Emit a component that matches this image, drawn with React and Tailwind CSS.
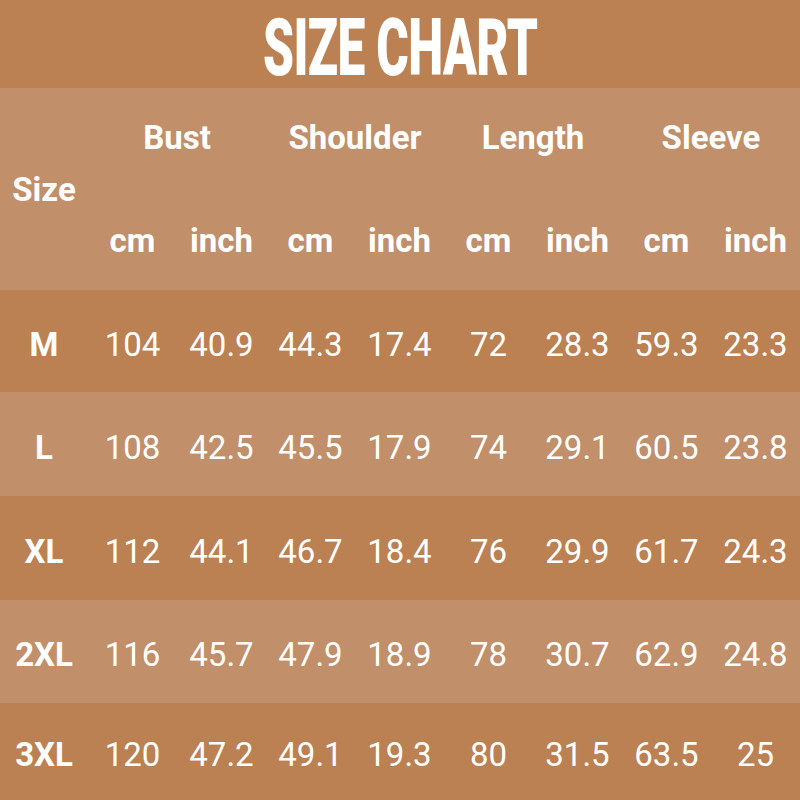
import React from 'react';

const rows = [
  { size: 'M', vals: ['104', '40.9', '44.3', '17.4', '72', '28.3', '59.3', '23.3'], h: 'h-[102px]', bg: 'bg-[#bc8152]' },
  { size: 'L', vals: ['108', '42.5', '45.5', '17.9', '74', '29.1', '60.5', '23.8'], h: 'h-[104px]', bg: 'bg-[#c18f69]' },
  { size: 'XL', vals: ['112', '44.1', '46.7', '18.4', '76', '29.9', '61.7', '24.3'], h: 'h-[104px]', bg: 'bg-[#bc8152]' },
  { size: '2XL', vals: ['116', '45.7', '47.9', '18.9', '78', '30.7', '62.9', '24.8'], h: 'h-[103px]', bg: 'bg-[#c18f69]' },
  { size: '3XL', vals: ['120', '47.2', '49.1', '19.3', '80', '31.5', '63.5', '25'], h: 'h-[97px]', bg: 'bg-[#bc8152]' },
];

const groups = ['Bust', 'Shoulder', 'Length', 'Sleeve'];

const App = () => {
  return (
    <div className="w-[800px] h-[800px] overflow-hidden text-white font-['Roboto',sans-serif]">
      {/* title band */}
      <div className="h-[88px] bg-[#bc8152] flex items-center justify-center">
        <h1 className="text-[80px] leading-none font-black tracking-[-1px] scale-x-[0.62] mt-[8px]">SIZE CHART</h1>
      </div>

      {/* header */}
      <div className="h-[202px] bg-[#c18f69] flex">
        <div className="w-[88px] flex items-center justify-center text-[33px] font-bold pt-[2px]">Size</div>
        <div className="flex-1 flex flex-col">
          <div className="h-[101px] grid grid-cols-4 items-center text-center text-[33px] font-bold">
            {groups.map((g) => (
              <div key={g} className="pb-[2px]">{g}</div>
            ))}
          </div>
          <div className="h-[101px] grid grid-cols-8 items-center text-center text-[33px] font-bold">
            {groups.map((g) => (
              <React.Fragment key={g}>
                <div className="pt-[2px]">cm</div>
                <div className="pt-[2px]">inch</div>
              </React.Fragment>
            ))}
          </div>
        </div>
      </div>

      {/* body rows */}
      {rows.map((r) => (
        <div key={r.size} className={`${r.h} ${r.bg} flex items-center pt-[7px]`}>
          <div className="w-[88px] text-center text-[33px] font-bold">{r.size}</div>
          <div className="flex-1 grid grid-cols-8 text-center text-[33px]">
            {r.vals.map((v, i) => (
              <div key={i}>{v}</div>
            ))}
          </div>
        </div>
      ))}
    </div>
  );
};

export default App;
